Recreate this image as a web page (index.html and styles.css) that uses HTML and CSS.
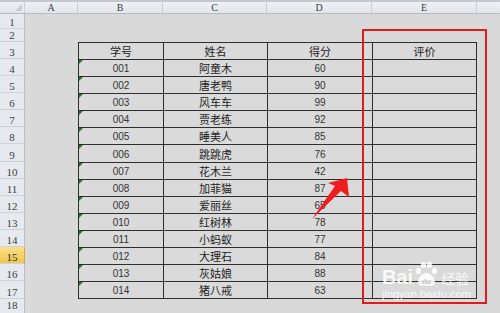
FILE: index.html
```html
<!DOCTYPE html>
<html lang="zh-CN">
<head>
<meta charset="utf-8">
<link rel="stylesheet" href="styles.css">
</head>
<body>
<div class="sheet">
  <div class="ch corner"><span class="tri"></span></div>
  <div class="ch">A</div><div class="ch">B</div><div class="ch">C</div><div class="ch">D</div><div class="ch">E</div><div class="ch last"></div>

  <div class="rh">1</div><div class="g"></div><div class="g"></div><div class="g"></div><div class="g"></div><div class="g"></div><div class="g"></div>
  <div class="rh">2</div><div class="g"></div><div class="g"></div><div class="g"></div><div class="g"></div><div class="g"></div><div class="g"></div>

  <div class="rh">3</div><div class="g"></div><div class="t">学号</div><div class="t">姓名</div><div class="t">得分</div><div class="t e">评价</div><div class="g"></div>
  <div class="rh">4</div><div class="g"></div><div class="t n mk">001</div><div class="t">阿童木</div><div class="t n">60</div><div class="t e"></div><div class="g"></div>
  <div class="rh">5</div><div class="g"></div><div class="t n mk">002</div><div class="t">唐老鸭</div><div class="t n">90</div><div class="t e"></div><div class="g"></div>
  <div class="rh">6</div><div class="g"></div><div class="t n mk">003</div><div class="t">风车车</div><div class="t n">99</div><div class="t e"></div><div class="g"></div>
  <div class="rh">7</div><div class="g"></div><div class="t n mk">004</div><div class="t">贾老练</div><div class="t n">92</div><div class="t e"></div><div class="g"></div>
  <div class="rh">8</div><div class="g"></div><div class="t n mk">005</div><div class="t">睡美人</div><div class="t n">85</div><div class="t e"></div><div class="g"></div>
  <div class="rh">9</div><div class="g"></div><div class="t n mk">006</div><div class="t">跳跳虎</div><div class="t n">76</div><div class="t e"></div><div class="g"></div>
  <div class="rh">10</div><div class="g"></div><div class="t n mk">007</div><div class="t">花木兰</div><div class="t n">42</div><div class="t e"></div><div class="g"></div>
  <div class="rh">11</div><div class="g"></div><div class="t n mk">008</div><div class="t">加菲猫</div><div class="t n">87</div><div class="t e"></div><div class="g"></div>
  <div class="rh">12</div><div class="g"></div><div class="t n mk">009</div><div class="t">爱丽丝</div><div class="t n">65</div><div class="t e"></div><div class="g"></div>
  <div class="rh">13</div><div class="g"></div><div class="t n mk">010</div><div class="t">红树林</div><div class="t n">78</div><div class="t e"></div><div class="g"></div>
  <div class="rh">14</div><div class="g"></div><div class="t n mk">011</div><div class="t">小蚂蚁</div><div class="t n">77</div><div class="t e"></div><div class="g"></div>
  <div class="rh sel">15</div><div class="g"></div><div class="t n mk">012</div><div class="t">大理石</div><div class="t n">84</div><div class="t e"></div><div class="g"></div>
  <div class="rh">16</div><div class="g"></div><div class="t n mk">013</div><div class="t">灰姑娘</div><div class="t n">88</div><div class="t e"></div><div class="g"></div>
  <div class="rh">17</div><div class="g"></div><div class="t n mk b">014</div><div class="t b">猪八戒</div><div class="t n b">63</div><div class="t e b"></div><div class="g"></div>
  <div class="rh last">18</div><div class="g"></div><div class="g"></div><div class="g"></div><div class="g"></div><div class="g"></div><div class="g"></div>
</div>

<div class="redbox"></div>

<svg class="arrow" width="60" height="60" viewBox="300 170 60 60">
  <polygon points="347,178 349,197 341,191 312,219 335,186 328,183" fill="#ee1c1c"/>
</svg>

<div class="mark">
  <div class="mark-top">
    <span class="bai">Bai</span>
    <svg class="paw" width="24" height="26" viewBox="0 0 24 26">
      <g fill="rgba(255,255,255,0.85)">
        <ellipse cx="4.5" cy="10" rx="2.6" ry="3.2"/>
        <ellipse cx="9.5" cy="4" rx="2.7" ry="3.3"/>
        <ellipse cx="15.5" cy="4" rx="2.7" ry="3.3"/>
        <ellipse cx="20.5" cy="10" rx="2.6" ry="3.2"/>
        <path d="M12.5 12 C8 12 4 17 4 21 C4 24.5 7 25.5 12.5 24.5 C18 25.5 21 24.5 21 21 C21 17 17 12 12.5 12 Z"/>
      </g>
      <text x="12.5" y="22.5" text-anchor="middle" font-family="Liberation Sans, sans-serif" font-size="7.5" font-weight="bold" fill="#c4c4c4">du</text>
    </svg>
    <span class="jy">经验</span>
  </div>
  <div class="url">jingyan.baidu.com</div>
</div>
</body>
</html>
```

FILE: styles.css
```css
html, body {
  margin: 0;
  padding: 0;
  background: #d9d9d9;
  width: 500px;
  height: 313px;
  overflow: hidden;
  font-family: "Noto Sans CJK SC", "Liberation Sans", sans-serif;
}

.sheet {
  display: grid;
  grid-template-columns: 25px 53px 85px 104px 105px 105px 23px;
  grid-template-rows: 14px 14.5px 13.2px repeat(15, 17.13px) 14px;
  width: 500px;
  background: #d9d9d9;
}

.ch {
  box-sizing: border-box;
  border-top: 2px solid #c4c7cb;
  border-bottom: 1px solid #b7bcc3;
  border-right: 1px solid #c9ced5;
  background: linear-gradient(#eef1f5, #e2e6eb);
  color: #3a3f46;
  font-family: "Liberation Serif", serif;
  font-size: 10px;
  display: flex;
  align-items: center;
  justify-content: center;
  line-height: 1;
}
.ch.last { border-right: none; }
.corner { position: relative; }
.tri {
  position: absolute;
  right: 2px;
  bottom: 2px;
  width: 0;
  height: 0;
  border-left: 7px solid transparent;
  border-bottom: 7px solid #c9ccd1;
}

.rh {
  box-sizing: border-box;
  background: #e6e9ed;
  border-right: 1px solid #b7bcc3;
  border-bottom: 1px solid #cdd2d8;
  color: #3a3f46;
  font-family: "Liberation Serif", serif;
  font-size: 11px;
  display: flex;
  align-items: flex-end;
  justify-content: center;
  line-height: 1;
}
.rh.last { border-bottom: none; align-items: center; }
.rh.sel {
  background: linear-gradient(#f9e08a, #f2c64c);
  border-right-color: #d7a83a;
  color: #2e2e2e;
}

.g { background: #d9d9d9; }

.t {
  box-sizing: border-box;
  position: relative;
  border-top: 1px solid #2e2e2e;
  border-left: 1px solid #2e2e2e;
  background: #dadada;
  color: #1e1e1e;
  font-size: 11px;
  display: flex;
  align-items: center;
  justify-content: center;
  padding-top: 1px;
  line-height: 1;
}
.t.e { border-right: 1px solid #2e2e2e; }
.t.b { border-bottom: 1px solid #2e2e2e; }
.t.n {
  font-family: "Liberation Sans", sans-serif;
  font-size: 10px;
  color: #333;
  padding-top: 2px;
}
.t.mk::before {
  content: "";
  position: absolute;
  left: 0;
  top: 0;
  width: 0;
  height: 0;
  border-top: 4px solid #1f7a1f;
  border-right: 4px solid transparent;
}

.redbox {
  position: absolute;
  left: 362px;
  top: 29px;
  width: 121px;
  height: 271px;
  border: 2px solid #e01b1b;
}

.arrow {
  position: absolute;
  left: 300px;
  top: 170px;
}

.mark {
  position: absolute;
  left: 382px;
  top: 259px;
  color: rgba(255, 255, 255, 0.85);
  display: flex;
  flex-direction: column;
  align-items: flex-start;
}
.mark-top {
  display: flex;
  align-items: flex-end;
  height: 28px;
}
.bai {
  font-family: "Liberation Sans", sans-serif;
  font-weight: bold;
  font-size: 20px;
  line-height: 20px;
  margin-bottom: 0;
}
.paw { margin-left: 1px; }
.jy {
  font-size: 14px;
  line-height: 16px;
  margin-left: 3px;
  margin-bottom: 1px;
}
.url {
  font-family: "Liberation Sans", sans-serif;
  font-size: 11px;
  line-height: 12px;
  margin-top: 1px;
}
```
